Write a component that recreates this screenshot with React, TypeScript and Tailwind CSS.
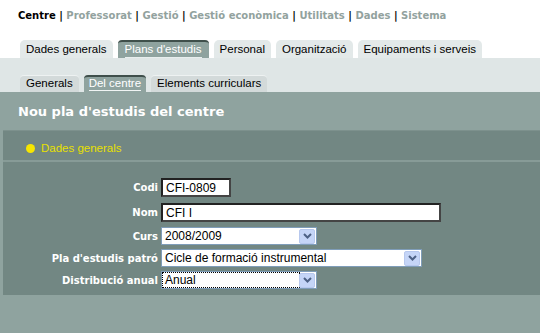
import React from 'react'

const navItems = ['Centre', 'Professorat', 'Gestió', 'Gestió econòmica', 'Utilitats', 'Dades', 'Sistema']
const mainTabs = ['Dades generals', "Plans d'estudis", 'Personal', 'Organització', 'Equipaments i serveis']
const subTabs = ['Generals', 'Del centre', 'Elements curriculars']

const verdana = { fontFamily: '"DejaVu Sans", Verdana, sans-serif' }
const arial = { fontFamily: '"Liberation Sans", Arial, sans-serif' }

function Chevron() {
  return (
    <div className="w-[16px] h-[15px] bg-[#c5d5f7] border border-[#b7c8ee] rounded-[2px] flex items-center justify-center">
      <svg width="9" height="6" viewBox="0 0 9 6">
        <path d="M1 1 L4.5 4.5 L8 1" stroke="#4d6185" strokeWidth="2" fill="none" />
      </svg>
    </div>
  )
}

function Select({ value, width, dotted }: { value: string; width: string; dotted?: boolean }) {
  return (
    <div className={`${width} h-[18px] bg-white border border-[#7f9db9] flex items-center justify-between px-[1px]`} style={arial}>
      <span
        className={`text-[12px] font-normal text-black leading-[14px] px-[2px] flex-1 ${
          dotted ? 'outline outline-1 outline-dotted outline-black' : ''
        }`}
      >
        {value}
      </span>
      <Chevron />
    </div>
  )
}

function Input({ value, width }: { value: string; width: string }) {
  return (
    <div
      className={`${width} h-[19px] bg-white border-2 border-t-[#222] border-l-[#222] border-r-[#444] border-b-[#444] flex items-center px-[3px] text-[12px] font-normal text-black`}
      style={arial}
    >
      {value}
    </div>
  )
}

export default function App() {
  return (
    <div className="w-[540px] h-[333px] bg-[#8fa39f] overflow-hidden" style={arial}>
      {/* top nav */}
      <div className="bg-white h-[40px] pl-[18px] pt-[8px] text-[10px] font-bold" style={verdana}>
        {navItems.map((item, i) => (
          <span key={item}>
            {i > 0 && <span className="text-black"> | </span>}
            <span className={i === 0 ? 'text-black' : 'text-[#92a29e]'}>{item}</span>
          </span>
        ))}
      </div>

      {/* main tabs */}
      <div className="bg-white h-[18px] flex items-end gap-[5px] pl-[20px]">
        {mainTabs.map((tab) =>
          tab === "Plans d'estudis" ? (
            <div key={tab} className="h-[18px] px-[7px] bg-[#8fa39f] rounded-t-[4px] border-t-2 border-[#3f4f4b] text-white text-[11.5px] leading-[14px] flex items-start">
              <span className="border-b border-[#e8eeee] pb-[1px]">{tab}</span>
            </div>
          ) : (
            <div key={tab} className="h-[18px] px-[6px] bg-[#e3e9e9] rounded-t-[5px] text-black text-[11.5px] leading-[16px] pt-[1px]">
              {tab}
            </div>
          )
        )}
      </div>

      {/* sub tabs */}
      <div className="bg-[#dfe6e6] h-[34px] flex items-end gap-[5px] pl-[20px]">
        {subTabs.map((tab) =>
          tab === 'Del centre' ? (
            <div key={tab} className="h-[17px] px-[5px] bg-[#8fa39f] rounded-t-[4px] border-t-2 border-[#3f4f4b] text-white text-[11.5px] leading-[13px]">
              <span className="border-b border-[#f0f4f4] pb-[1px]">{tab}</span>
            </div>
          ) : (
            <div key={tab} className="h-[17px] px-[6px] bg-[#d3dada] rounded-t-[4px] border-t border-[#eef2f2] text-black text-[11.5px] leading-[15px]">
              {tab}
            </div>
          )
        )}
      </div>

      {/* header */}
      <div className="h-[38px] pl-[18px] pt-[10px] text-white font-bold text-[13px]" style={verdana}>
        Nou pla d'estudis del centre
      </div>

      {/* panel */}
      <div className="ml-[3px] bg-[#728783] border-t border-[#7d918d] h-[165px]">
        <div className="h-[31px] flex items-start gap-[6px] pl-[23px] pt-[11px] border-b-2 border-[#879b97]">
          <div className="w-[9px] h-[9px] rounded-full bg-[#f7e600] mt-[2px]" />
          <span className="text-[#e8e000] text-[11.5px] leading-[13px]">Dades generals</span>
        </div>

        <div className="grid grid-cols-[155px_auto] gap-x-[3px] items-center pt-[13px] text-[10px] font-bold text-white" style={verdana}>
          <span className="text-right">Codi</span>
          <div className="h-[25px] flex items-center"><Input value="CFI-0809" width="w-[70px]" /></div>
          <span className="text-right">Nom</span>
          <div className="h-[25px] flex items-center"><Input value="CFI I" width="w-[280px]" /></div>
          <span className="text-right">Curs</span>
          <div className="h-[22px] flex items-center"><Select value="2008/2009" width="w-[156px]" /></div>
          <span className="text-right">Pla d'estudis patró</span>
          <div className="h-[22px] flex items-center"><Select value="Cicle de formació instrumental" width="w-[261px]" /></div>
          <span className="text-right">Distribució anual</span>
          <div className="h-[22px] flex items-center"><Select value="Anual" width="w-[156px]" dotted /></div>
        </div>
      </div>
    </div>
  )
}
